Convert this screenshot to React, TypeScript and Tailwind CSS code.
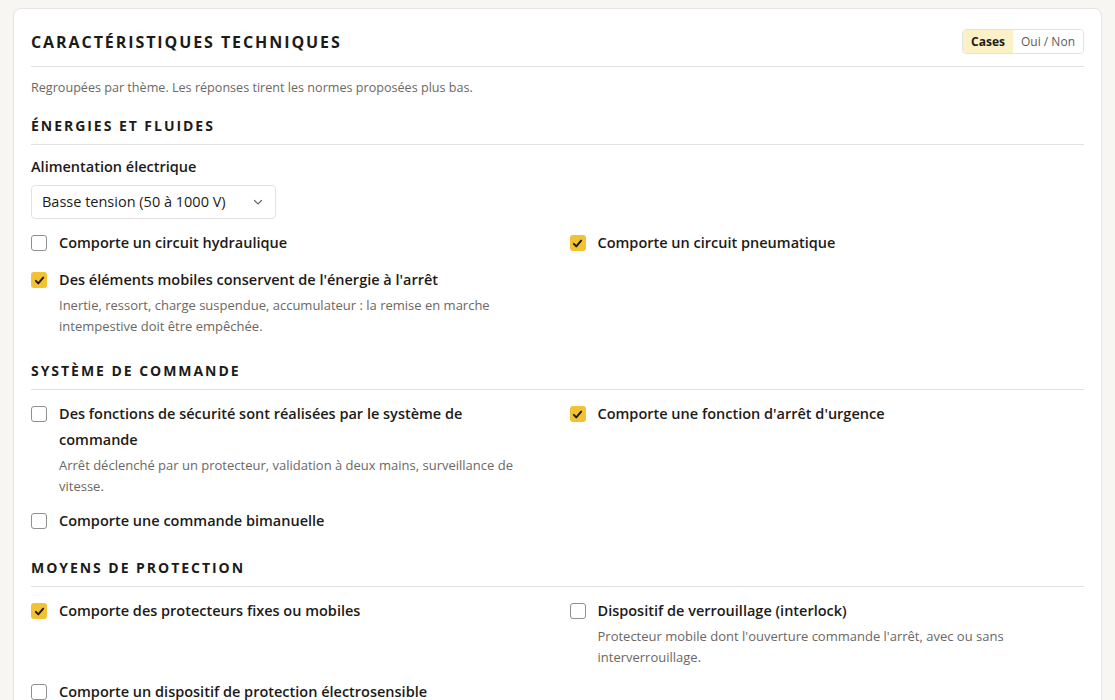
import { useState } from "react";

type Item = {
  id: string;
  label: string;
  hint?: string;
  checked: boolean;
};

type Section = {
  title: string;
  items: Item[][];
};

const sections: Section[] = [
  {
    title: "Système de commande",
    items: [
      [
        {
          id: "safety-fn",
          label: "Des fonctions de sécurité sont réalisées par le système de commande",
          hint: "Arrêt déclenché par un protecteur, validation à deux mains, surveillance de vitesse.",
          checked: false,
        },
        { id: "estop", label: "Comporte une fonction d'arrêt d'urgence", checked: true },
      ],
      [{ id: "bimanual", label: "Comporte une commande bimanuelle", checked: false }],
    ],
  },
  {
    title: "Moyens de protection",
    items: [
      [
        { id: "guards", label: "Comporte des protecteurs fixes ou mobiles", checked: true },
        {
          id: "interlock",
          label: "Dispositif de verrouillage (interlock)",
          hint: "Protecteur mobile dont l'ouverture commande l'arrêt, avec ou sans interverrouillage.",
          checked: false,
        },
      ],
      [{ id: "esp", label: "Comporte un dispositif de protection électrosensible", checked: false }],
    ],
  },
];

function CheckRow({ item }: { item: Item }) {
  const [on, setOn] = useState(item.checked);
  return (
    <label className="flex cursor-pointer items-start gap-3">
      <span
        onClick={() => setOn(!on)}
        className={
          on
            ? "mt-[5px] flex h-4 w-4 shrink-0 items-center justify-center rounded-[3px] bg-[#f2c233]"
            : "mt-[5px] flex h-4 w-4 shrink-0 items-center justify-center rounded-[3px] border border-[#8f8f8f] bg-white"
        }
      >
        {on && (
          <svg viewBox="0 0 16 16" className="h-[13px] w-[13px]" fill="none">
            <path
              d="M3.5 8.5l3 3 6-7"
              stroke="#1c1a17"
              strokeWidth="2.4"
              strokeLinecap="round"
              strokeLinejoin="round"
            />
          </svg>
        )}
      </span>
      <span className="flex max-w-[470px] flex-col">
        <span className="text-[14.5px] font-semibold leading-[26px] text-[#1c1b19]">{item.label}</span>
        {item.hint && (
          <span className="mt-[2px] text-[13px] leading-[21px] text-[#6b6863]">{item.hint}</span>
        )}
      </span>
    </label>
  );
}

function SectionTitle({ children }: { children: string }) {
  return (
    <h3 className="border-b border-[#e4e2de] pb-2 text-[14px] font-bold uppercase leading-5 tracking-[0.14em] text-[#1c1b19]">
      {children}
    </h3>
  );
}

function Grid({ rows }: { rows: Item[][] }) {
  return (
    <div className="mt-[11px] grid grid-cols-2 gap-x-6 gap-y-[11px]">
      {rows.map((row) =>
        [0, 1].map((i) =>
          row[i] ? <CheckRow key={row[i].id} item={row[i]} /> : <div key={row[0].id + "-empty"} />
        )
      )}
    </div>
  );
}

export default function App() {
  const [mode, setMode] = useState<"cases" | "ouinon">("cases");

  return (
    <div
      className="min-h-screen bg-[#f7f6f3] px-[13px] pt-2"
      style={{ fontFamily: "'Open Sans', 'Noto Sans', sans-serif" }}
    >
      <div className="rounded-lg border border-[#e6e4e0] bg-white px-[17px] pb-6 pt-5">
        <header className="flex items-center justify-between border-b border-[#e4e2de] pb-3">
          <h2 className="text-[16px] font-bold uppercase leading-6 tracking-[0.12em] text-[#1c1b19]">
            Caractéristiques techniques
          </h2>
          <div className="flex h-[25px] overflow-hidden rounded border border-[#e4e2de] text-[12px]">
            <button
              onClick={() => setMode("cases")}
              className={
                mode === "cases"
                  ? "bg-[#fbf0c6] px-[8px] font-bold text-[#1c1b19]"
                  : "bg-white px-[8px] text-[#5f5c57]"
              }
            >
              Cases
            </button>
            <button
              onClick={() => setMode("ouinon")}
              className={
                mode === "ouinon"
                  ? "bg-[#fbf0c6] px-[8px] font-bold text-[#1c1b19]"
                  : "bg-white px-[8px] text-[#5f5c57]"
              }
            >
              Oui / Non
            </button>
          </div>
        </header>

        <p className="mt-[11px] text-[12.6px] leading-5 text-[#6b6863]">
          Regroupées par thème. Les réponses tirent les normes proposées plus bas.
        </p>

        <section className="mt-[18px]">
          <SectionTitle>Énergies et fluides</SectionTitle>
          <div className="mt-[11px] text-[14.5px] font-semibold leading-[22px] text-[#1c1b19]">
            Alimentation électrique
          </div>
          <div className="mt-[7px] flex h-[34px] w-[245px] items-center justify-between rounded border border-[#e4e2de] bg-white pl-[10px] pr-[11px] text-[14.5px] text-[#1c1b19]">
            <span>Basse tension (50 à 1000 V)</span>
            <svg viewBox="0 0 12 12" className="h-3 w-3" fill="none">
              <path d="M2.5 4.5L6 8l3.5-3.5" stroke="#6b6863" strokeWidth="1.2" strokeLinecap="round" />
            </svg>
          </div>
          <Grid
            rows={[
              [
                { id: "hydro", label: "Comporte un circuit hydraulique", checked: false },
                { id: "pneu", label: "Comporte un circuit pneumatique", checked: true },
              ],
              [
                {
                  id: "stored",
                  label: "Des éléments mobiles conservent de l'énergie à l'arrêt",
                  hint: "Inertie, ressort, charge suspendue, accumulateur : la remise en marche intempestive doit être empêchée.",
                  checked: true,
                },
              ],
            ]}
          />
        </section>

        {sections.map((s) => (
          <section key={s.title} className="mt-6">
            <SectionTitle>{s.title}</SectionTitle>
            <Grid rows={s.items} />
          </section>
        ))}
      </div>
    </div>
  );
}
